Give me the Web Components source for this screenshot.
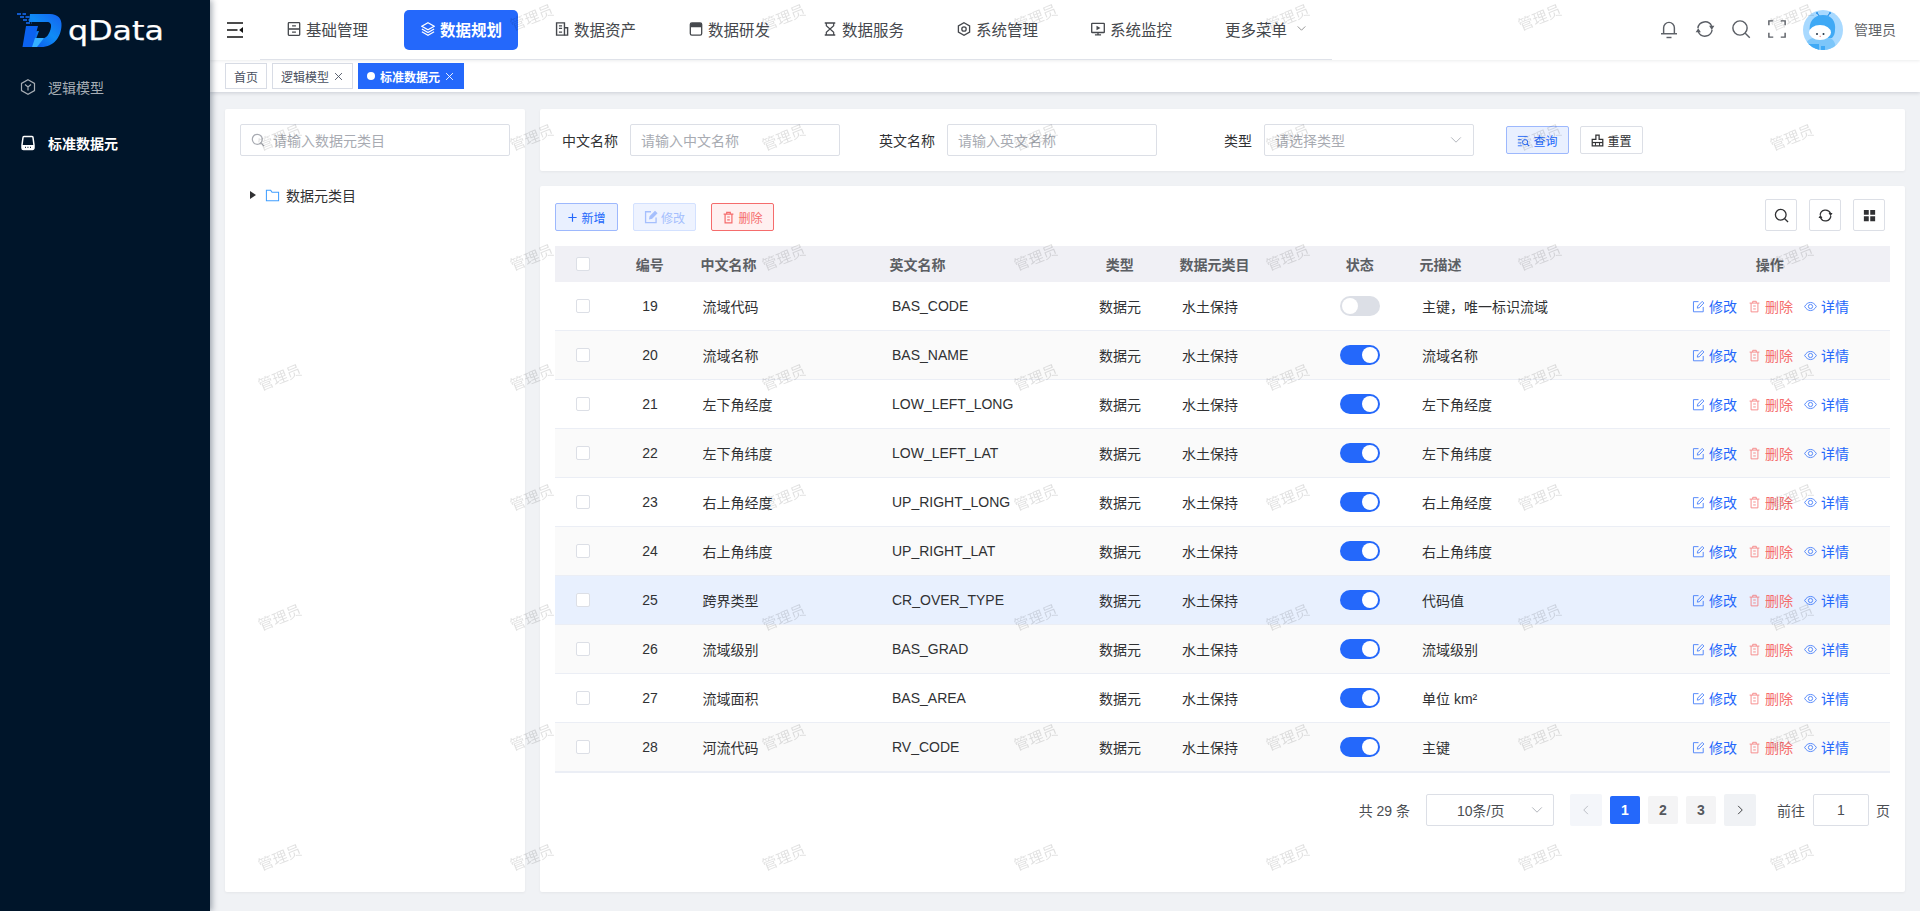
<!DOCTYPE html>
<html lang="zh">
<head>
<meta charset="utf-8">
<title>qData</title>
<style>
  html, body { margin: 0; height: 911px; overflow: hidden; background: #f0f2f5; }
  body { font-family: "Liberation Sans", "Noto Sans CJK SC", sans-serif; font-size: 14px; color: #303133; }
</style>
</head>
<body>
<q-app>
  <q-sidebar slot="side">
    <q-menu-item icon="cube">逻辑模型</q-menu-item>
    <q-menu-item icon="drive" active>标准数据元</q-menu-item>
  </q-sidebar>
  <q-header slot="top">
    <q-nav-item icon="basic">基础管理</q-nav-item>
    <q-nav-item icon="layers" active>数据规划</q-nav-item>
    <q-nav-item icon="asset">数据资产</q-nav-item>
    <q-nav-item icon="dev">数据研发</q-nav-item>
    <q-nav-item icon="hourglass">数据服务</q-nav-item>
    <q-nav-item icon="hexagon">系统管理</q-nav-item>
    <q-nav-item icon="monitor">系统监控</q-nav-item>
    <q-nav-item more>更多菜单</q-nav-item>
  </q-header>
  <q-tags slot="top">
    <q-tag>首页</q-tag>
    <q-tag closable>逻辑模型</q-tag>
    <q-tag closable active>标准数据元</q-tag>
  </q-tags>

  <q-tree-card>
    <q-tree-node>数据元类目</q-tree-node>
  </q-tree-card>

  <q-filter-card>
    <q-field label="中文名称" placeholder="请输入中文名称"></q-field>
    <q-field label="英文名称" placeholder="请输入英文名称"></q-field>
    <q-field label="类型" placeholder="请选择类型" select></q-field>
    <q-btn kind="primary" icon="query" slot="actions">查询</q-btn>
    <q-btn icon="broom" slot="actions">重置</q-btn>
  </q-filter-card>

  <q-table-card>
    <q-btn kind="primary" icon="plus" size="11" slot="tools">新增</q-btn>
    <q-btn kind="disabled" icon="edit" size="14" slot="tools">修改</q-btn>
    <q-btn kind="danger" icon="trash" size="13" slot="tools">删除</q-btn>
    <q-icon-btn icon="search" slot="right"></q-icon-btn>
    <q-icon-btn icon="refresh" slot="right"></q-icon-btn>
    <q-icon-btn icon="grid" slot="right"></q-icon-btn>

    <q-row code="19" cn="流域代码" en="BAS_CODE" desc="主键，唯一标识流域"></q-row>
    <q-row code="20" cn="流域名称" en="BAS_NAME" desc="流域名称" on striped></q-row>
    <q-row code="21" cn="左下角经度" en="LOW_LEFT_LONG" desc="左下角经度" on></q-row>
    <q-row code="22" cn="左下角纬度" en="LOW_LEFT_LAT" desc="左下角纬度" on striped></q-row>
    <q-row code="23" cn="右上角经度" en="UP_RIGHT_LONG" desc="右上角经度" on></q-row>
    <q-row code="24" cn="右上角纬度" en="UP_RIGHT_LAT" desc="右上角纬度" on striped></q-row>
    <q-row code="25" cn="跨界类型" en="CR_OVER_TYPE" desc="代码值" on hover></q-row>
    <q-row code="26" cn="流域级别" en="BAS_GRAD" desc="流域级别" on striped></q-row>
    <q-row code="27" cn="流域面积" en="BAS_AREA" desc="单位 km²" on></q-row>
    <q-row code="28" cn="河流代码" en="RV_CODE" desc="主键" on striped></q-row>

    <q-pagination slot="footer"></q-pagination>
  </q-table-card>
</q-app>
<q-watermark text="管理员"></q-watermark>

<script>
const BLUE = '#2468fb';

const ICONS = {
  burger: '<path d="M0 1h16M0 8h10.500M0 15h16" stroke-width="1.400"/><path d="M16 5v6l-3.800-3z" fill="currentColor" stroke="none"/>',
  basic: '<rect x="1.500" y=".8" width="13" height="14.400" rx=".8" stroke-width="1.500"/><path d="M1.500 8h13" stroke-width="1.800"/><path d="M5.800 4.400h4.400M5.800 11.600h4.400" stroke-width="1.500"/>',
  layers: '<path d="M8 .8 15 4.800 8 8.800 1 4.800z" stroke-width="1.400"/><path d="M1 8 8 12 15 8" stroke-width="1.400"/><path d="M1 11.200 8 15.200 15 11.200" stroke-width="1.400"/>',
  asset: '<path d="M1.800 1h9v14h-9z" stroke-width="1.600"/><path d="M10.800 6.500h3.600V15h-3.600" stroke-width="1.600"/><path d="M4.500 4.300h3.600M4.500 7.300h3.600M4.500 11.500h3.600" stroke-width="1.400"/>',
  dev: '<rect x="1.500" y="1" width="13" height="14" rx="1.800" stroke-width="1.500"/><path d="M1.500 6V2.800A1.800 1.800 0 0 1 3.300 1h9.400a1.800 1.800 0 0 1 1.800 1.800V6z" fill="currentColor" stroke="none"/>',
  hourglass: '<path d="M2 1.200h12M2 14.800h12" stroke-width="1.700"/><path d="M3.800 1.200v3L8 8l-4.200 3.800v3M12.200 1.200v3L8 8l4.200 3.800v3" stroke-width="1.400"/>',
  hexagon: '<path d="M8 .8 14.400 4.400v7.200L8 15.200l-6.400-3.600V4.400z" stroke-width="1.500"/><circle cx="8" cy="8" r="2.500" stroke-width="1.500"/>',
  monitor: '<rect x=".8" y="1.500" width="14.400" height="10.500" rx=".6" stroke-width="1.500"/><path d="M8 12v2.700M4.500 14.700h7" stroke-width="1.500"/><path d="M6.300 4.300 10.800 6.800 6.300 9.300z" fill="currentColor" stroke="none"/>',
  cube: '<path d="M8 .8 14.500 4.400v7.200L8 15.200l-6.500-3.600V4.400z"/><path d="M5 5.500 8 8l3-2.500M8 8v3.500"/>',
  drive: '<path d="M4 1.500h8a1 1 0 0 1 1 1L14 10v3a1.500 1.500 0 0 1-1.500 1.500h-9A1.500 1.500 0 0 1 2 13v-3l1-7.500a1 1 0 0 1 1-1z" stroke-width="1.500"/><path d="M2 10h12v3a1.500 1.500 0 0 1-1.500 1.500h-9A1.500 1.500 0 0 1 2 13z" fill="currentColor" stroke="none"/><path d="M5 12.400h.9M7.500 12.400h.9M10 12.400h.9" stroke="#00152a" stroke-width="1.200"/>',
  bell: '<path d="M3.700 11.800V7a4.300 4.300 0 0 1 8.600 0v4.800"/><path d="M1.600 11.800h12.800"/><path d="M6 14.800h4"/>',
  refresh: '<path d="M2.300 7.400A5.800 5.800 0 0 1 13.300 5.600" stroke-width="1.400"/><path d="M13.700 8.600A5.800 5.800 0 0 1 2.700 10.400" stroke-width="1.400"/><path d="M11.300 5.400h4.200L13.400 8.700zM.5 10.600h4.200L2.600 7.300z" fill="currentColor" stroke="none"/>',
  search: '<circle cx="7.200" cy="7.200" r="5.700" stroke-width="1.400"/><path d="M11.400 11.400 15 15" stroke-width="1.400"/>',
  fullscreen: '<path d="M1.500 5V1.500H5M11 1.500h3.500V5M14.500 11v3.500H11M5 14.500H1.500V11" stroke-width="1.500"/>',
  folder: '<path d="M1.500 2.500h4.600l1.400 2h7v9h-13z" stroke-width="1.100"/>',
  chevron: '<path d="M2.500 5 8 10.500 13.500 5" stroke-width="1"/>',
  left: '<path d="M10.500 2.500 5 8l5.500 5.500" stroke-width="1.200"/>',
  right: '<path d="M5.500 2.500 11 8l-5.500 5.500" stroke-width="1.200"/>',
  close: '<path d="M3 3l10 10M13 3 3 13" stroke-width="1.300"/>',
  plus: '<path d="M8 2v12M2 8h12" stroke-width="1.700"/>',
  edit: '<path d="M13.800 8.500v6H1.800V2H8" stroke-width="1.500"/><path d="M6.500 10 7 7.500 12.600 1.700l2 2-5.600 5.800z" stroke-width="1.300" fill="currentColor"/>',
  trash: '<path d="M2 3.800h12M5.800 3.800V1.600h4.400v2.200M3.800 3.800v10.800h8.400V3.800M6.400 7.400h3.200M6.400 11h3.200" stroke-width="1.500"/>',
  eye: '<path d="M.8 8c1.900-3.300 4.400-5 7.200-5s5.300 1.700 7.200 5c-1.900 3.300-4.400 5-7.200 5S2.700 11.300.8 8z" stroke-width="1.500"/><circle cx="8" cy="8" r="2.600" stroke-width="1.500"/>',
  query: '<path d="M1 3h12M1 7h4.500M1 11h4.500M1 14.500h5" stroke-width="1.100"/><circle cx="10" cy="10" r="3.200" stroke-width="1.200"/><path d="M12.300 12.300 15 15" stroke-width="1.300"/>',
  broom: '<path d="M6 1.500h4v5h4.500v8h-13v-8H6z" stroke-width="1.500"/><path d="M1.500 10.500h13" stroke-width="1.500"/><path d="M5.500 10.500v4M10.500 10.500v4" stroke-width="1.200"/>',
  grid: '<path d="M2 2h5.200v5.200H2zM8.800 2H14v5.200H8.800zM2 8.800h5.200V14H2zM8.800 8.800H14V14H8.800z" fill="currentColor" stroke="none"/>'
};

function icon(name, w, h) {
  return `<svg width="${w}" height="${h || w}" viewBox="0 0 16 16" fill="none" stroke="currentColor" stroke-width="1.200" aria-hidden="true">${ICONS[name]}</svg>`;
}

class QApp extends HTMLElement {
  connectedCallback() {
    this.attachShadow({ mode: 'open' }).innerHTML = `
      <style>
        :host { display: grid; grid-template-columns: 210px 1fr; height: 911px; }
        .main { display: flex; flex-direction: column; min-width: 0; }
        .content { flex: 1; display: grid; grid-template-columns: 300px 1fr; grid-template-rows: 62px 706px; gap: 15px; padding: 17px 15px 0; }
      </style>
      <slot name="side"></slot>
      <div class="main">
        <slot name="top"></slot>
        <div class="content"><slot></slot></div>
      </div>`;
  }
}

class QSidebar extends HTMLElement {
  connectedCallback() {
    this.attachShadow({ mode: 'open' }).innerHTML = `
      <style>
        :host { display: block; background: #00152a; box-shadow: 2px 0 6px rgba(0,21,41,.35); position: relative; z-index: 3; }
        .logo { height: 60px; display: flex; align-items: center; padding-left: 17px; gap: 5px; box-sizing: border-box; }
        .word { color: #fff; font: 400 26px "DejaVu Sans", sans-serif; line-height: 60px; margin-top: 1px; display: inline-block; transform: scaleX(1.22); transform-origin: left center; -webkit-text-stroke: .25px #fff; }
      </style>
      <div class="logo">
        <svg width="46" height="35" viewBox="0 0 46 35" aria-hidden="true">
          <defs>
            <linearGradient id="lg" x1="0" y1="1" x2="1" y2="0">
              <stop offset="0" stop-color="#0a49e8"/><stop offset=".55" stop-color="#0f8cf5"/><stop offset="1" stop-color="#1460f0"/>
            </linearGradient>
          </defs>
          <path d="M0 1h9M3 4h13M6 7h10M9 10h6" stroke="#1670ff" stroke-width="1.500" stroke-dasharray="4 1.500"/>
          <path fill="url(#lg)" fill-rule="evenodd" d="M13 1h20c8 0 12 5 11.500 11.500C44 24 37 34 24 34H6l4-15 12-1-3 8h5c5 0 9-5 10-12 .5-3-1-5-4-5H12z"/>
          <path fill="#0b62f0" d="M9 13h12l-3.500 13-2 8H5.500z"/>
          <path fill="#35b0ff" d="M18 25h9l-7 9h-5z"/>
        </svg>
        <span class="word">qData</span>
      </div>
      <nav><slot></slot></nav>`;
  }
}

class QMenuItem extends HTMLElement {
  connectedCallback() {
    const on = this.hasAttribute('active');
    this.attachShadow({ mode: 'open' }).innerHTML = `
      <style>
        :host { display: flex; align-items: center; height: 56px; box-sizing: border-box; padding: 0 0 2px 20px; gap: 12px; color: ${on ? '#fff' : '#a6adb4'}; font-size: 14px; font-weight: ${on ? 700 : 400}; }
        svg { flex: none; }
      </style>
      ${icon(this.getAttribute('icon'), 16)}<slot></slot>`;
  }
}

class QHeader extends HTMLElement {
  connectedCallback() {
    this.attachShadow({ mode: 'open' }).innerHTML = `
      <style>
        :host { display: flex; align-items: center; height: 60px; background: #fff; box-shadow: 0 1px 3px rgba(0,21,41,.08); position: relative; z-index: 2; }
        .burger { width: 50px; padding-left: 17px; box-sizing: border-box; display: flex; color: #111; }
        nav { display: flex; height: 60px; box-sizing: border-box; border-bottom: 1px solid #dfe2e9; }
        .right { margin-left: auto; display: flex; align-items: center; color: #5b5f66; padding-right: 24px; }
        .tools { display: flex; gap: 16px; margin: -2px 16px 0 0; }
        .tools svg * { stroke-width: 1.150; }
        .avatar { width: 40px; height: 40px; border-radius: 50%; overflow: hidden; display: block; }
        .name { margin: -2px 0 0 11px; font-size: 14px; color: #5f6368; }
      </style>
      <div class="burger">${icon('burger', 16)}</div>
      <nav><slot></slot></nav>
      <div class="right">
        <div class="tools">${icon('bell', 20)}${icon('refresh', 20)}${icon('search', 20)}${icon('fullscreen', 20)}</div>
        <svg class="avatar" viewBox="0 0 40 40" aria-hidden="true">
          <rect width="40" height="40" fill="#a8d9ff"/>
          <path d="M17 7 14 3M24 7l3-4" stroke="#2a8fe6" stroke-width="1.200" fill="none"/>
          <circle cx="14" cy="3" r="1" fill="#2a8fe6"/><circle cx="27" cy="3" r="1" fill="#2a8fe6"/>
          <path d="M7 22C5 12 11 5 20 5s13 7 12 15c0 3-1 6-3 8H10c-2-1-3-3-3-6z" fill="#3fa9f5"/>
          <path d="M1 40c0-7 5-12 10-12h15c4 0 7 5 7 12z" fill="#7cc6fa"/>
          <path d="M4 34h12v6H4zM18 36h4v4h-4z" fill="#3fa9f5"/>
          <ellipse cx="17" cy="22.500" rx="11" ry="7.500" fill="#fff"/>
          <circle cx="14" cy="24" r="1" fill="#234"/><circle cx="20.500" cy="24" r="1" fill="#234"/>
          <path d="M16.500 26.300h1.500" stroke="#e88" stroke-width="1"/>
        </svg>
        <span class="name">管理员</span>
      </div>`;
  }
}

class QNavItem extends HTMLElement {
  connectedCallback() {
    const on = this.hasAttribute('active');
    const more = this.hasAttribute('more');
    this.attachShadow({ mode: 'open' }).innerHTML = `
      <style>
        :host { display: block; width: 134px; padding: 10px; box-sizing: border-box; height: 59px; }
        .item { height: 40px; box-sizing: border-box; display: flex; align-items: center; padding: 0 0 3px 17px; gap: ${more ? 0 : 5}px; border-radius: 5px; font-size: 15.500px; white-space: nowrap;
                color: ${on ? '#fff' : '#45484d'}; background: ${on ? BLUE : 'transparent'}; font-weight: ${on ? 700 : 400}; }
        svg { flex: none; }
        .chev { display: flex; margin-left: 9px; color: #666; }
      </style>
      <div class="item">${more ? '' : icon(this.getAttribute('icon'), 14)}<slot></slot>${more ? `<span class="chev">${icon('chevron', 11)}</span>` : ''}</div>`;
  }
}

class QTags extends HTMLElement {
  connectedCallback() {
    this.attachShadow({ mode: 'open' }).innerHTML = `
      <style>
        :host { display: flex; align-items: center; gap: 5px; height: 32px; padding-left: 15px; background: #fff; box-shadow: 0 1px 4px rgba(0,21,41,.16); position: relative; z-index: 1; }
      </style>
      <slot></slot>`;
  }
}

class QTag extends HTMLElement {
  connectedCallback() {
    const on = this.hasAttribute('active');
    const closable = this.hasAttribute('closable');
    this.attachShadow({ mode: 'open' }).innerHTML = `
      <style>
        :host { display: flex; align-items: center; height: 26px; box-sizing: border-box; padding: 0 8px; font-size: 12px;
                border: 1px solid ${on ? BLUE : '#d8dce5'}; background: ${on ? BLUE : '#fff'}; color: ${on ? '#fff' : '#495060'}; font-weight: ${on ? 700 : 400}; }
        .dot { width: 8px; height: 8px; border-radius: 50%; background: #fff; margin-right: 5px; }
        .x { display: flex; margin-left: 4px; font-weight: 400; }
      </style>
      ${on ? '<span class="dot"></span>' : ''}<slot></slot>${closable ? `<span class="x">${icon('close', 11)}</span>` : ''}`;
  }
}

class QTreeCard extends HTMLElement {
  connectedCallback() {
    this.attachShadow({ mode: 'open' }).innerHTML = `
      <style>
        :host { display: block; grid-row: 1 / span 2; background: #fff; border-radius: 2px; padding: 15px; box-shadow: 0 1px 3px rgba(0,0,0,.05); box-sizing: border-box; }
        .search { height: 32px; box-sizing: border-box; border: 1px solid #dcdfe6; border-radius: 2px; display: flex; align-items: center; padding-left: 10px; gap: 8px; color: #a8abb2; font-size: 14px; }
        .tree { margin-top: 26px; }
      </style>
      <div class="search">${icon('search', 14)}<span>请输入数据元类目</span></div>
      <div class="tree"><slot></slot></div>`;
  }
}

class QTreeNode extends HTMLElement {
  connectedCallback() {
    this.attachShadow({ mode: 'open' }).innerHTML = `
      <style>
        :host { display: flex; align-items: center; height: 26px; padding-left: 10px; font-size: 14px; color: #303133; }
        .caret { width: 0; height: 0; border-left: 6px solid #303133; border-top: 4px solid transparent; border-bottom: 4px solid transparent; margin-right: 9px; }
        .folder { display: flex; color: #409eff; margin-right: 6px; }
      </style>
      <span class="caret"></span><span class="folder">${icon('folder', 15)}</span><slot></slot>`;
  }
}

class QFilterCard extends HTMLElement {
  connectedCallback() {
    this.attachShadow({ mode: 'open' }).innerHTML = `
      <style>
        :host { display: flex; align-items: center; background: #fff; border-radius: 2px; padding: 0 15px; box-shadow: 0 1px 3px rgba(0,0,0,.05); }
        .actions { display: flex; gap: 11px; }
      </style>
      <slot></slot>
      <div class="actions"><slot name="actions"></slot></div>`;
  }
}

class QField extends HTMLElement {
  connectedCallback() {
    const select = this.hasAttribute('select');
    this.attachShadow({ mode: 'open' }).innerHTML = `
      <style>
        :host { display: flex; align-items: center; margin-right: 32px; font-size: 14px; }
        label { width: 75px; box-sizing: border-box; padding: 0 12px 1px 0; text-align: right; color: #303133; white-space: nowrap; }
        .box { width: 210px; height: 32px; box-sizing: border-box; border: 1px solid #dcdfe6; border-radius: 2px; display: flex; align-items: center; justify-content: space-between; padding: 0 10px; color: #a8abb2; }
        svg { color: #a8abb2; }
      </style>
      <label>${this.getAttribute('label')}</label>
      <div class="box"><span>${this.getAttribute('placeholder')}</span>${select ? icon('chevron', 14) : ''}</div>`;
  }
}

const BTN_KINDS = {
  plain: 'background:#fff;border-color:#dcdfe6;color:#303133;',
  primary: `background:#e9f0ff;border-color:#9db8fd;color:${BLUE};`,
  disabled: 'background:#eef3ff;border-color:#d3e1ff;color:#a5bffd;',
  danger: 'background:#fff0f0;border-color:#f56c6c;color:#f56c6c;'
};

class QBtn extends HTMLElement {
  connectedCallback() {
    const kind = this.getAttribute('kind') || 'plain';
    this.attachShadow({ mode: 'open' }).innerHTML = `
      <style>
        :host { display: inline-flex; align-items: center; justify-content: center; gap: 3px; width: 63px; height: 28px; box-sizing: border-box; border: 1px solid; border-radius: 2px; font-size: 12px; ${BTN_KINDS[kind]} }
      </style>
      ${icon(this.getAttribute('icon'), this.getAttribute('size') || 13)}<slot></slot>`;
  }
}

class QIconBtn extends HTMLElement {
  connectedCallback() {
    this.attachShadow({ mode: 'open' }).innerHTML = `
      <style>
        :host { display: flex; align-items: center; justify-content: center; width: 32px; height: 32px; box-sizing: border-box; border: 1px solid #dcdfe6; border-radius: 2px; color: #303133; }
      </style>
      ${icon(this.getAttribute('icon'), 15)}`;
  }
}

const COLS = '56px 78px 189px 194px 96px 144px 96px 242px 240px';

class QTableCard extends HTMLElement {
  connectedCallback() {
    this.attachShadow({ mode: 'open' }).innerHTML = `
      <style>
        :host { display: block; background: #fff; border-radius: 2px; padding: 13px 15px 0; box-shadow: 0 1px 3px rgba(0,0,0,.05); --cols: ${COLS}; }
        .toolbar { display: flex; justify-content: space-between; align-items: flex-end; height: 32px; padding-right: 5px; margin-bottom: 15px; }
        .group { display: flex; gap: 15px; }
        .group.right { gap: 12px; }
        .head { display: grid; grid-template-columns: var(--cols); align-items: center; height: 36px; box-sizing: border-box; padding-bottom: 1px; background: #f0f0f5; font-weight: 700; color: #5c5f64; font-size: 14px; }
        .head > * { padding: 0 12px 0 11.500px; white-space: nowrap; }
        .c { text-align: center; }
        .check { width: 14px; height: 14px; box-sizing: border-box; padding: 0; border: 1px solid #dcdfe6; border-radius: 2px; background: #fff; justify-self: center; }
        .rows { border-bottom: 1px solid #ebeef5; }
        .pager { margin-top: 21px; }
      </style>
      <div class="toolbar">
        <div class="group"><slot name="tools"></slot></div>
        <div class="group right"><slot name="right"></slot></div>
      </div>
      <div class="head">
        <span class="check"></span><span class="c">编号</span><span>中文名称</span><span>英文名称</span><span class="c">类型</span><span>数据元类目</span><span class="c">状态</span><span>元描述</span><span class="c">操作</span>
      </div>
      <div class="rows"><slot></slot></div>
      <div class="pager"><slot name="footer"></slot></div>`;
  }
}

class QRow extends HTMLElement {
  connectedCallback() {
    const a = n => this.getAttribute(n);
    const bg = this.hasAttribute('hover') ? '#e8f0fe' : this.hasAttribute('striped') ? '#fafafa' : '#fff';
    this.attachShadow({ mode: 'open' }).innerHTML = `
      <style>
        :host { display: grid; grid-template-columns: var(--cols); align-items: center; height: 49px; box-sizing: border-box; border-bottom: 1px solid #ebeef5; background: ${bg}; font-size: 14px; color: #303133; white-space: nowrap; }
        .t { padding: 0 14px; }
        .t.cn { padding-left: 13.500px; }
        .c { text-align: center; }
        .check { width: 14px; height: 14px; box-sizing: border-box; border: 1px solid #dcdfe6; border-radius: 2px; background: #fff; justify-self: center; }
        .sw { justify-self: center; }
        .ops { display: flex; justify-content: center; gap: 11px; padding-left: 1px; }
        .op { display: inline-flex; align-items: center; gap: 4px; color: ${BLUE}; }
        .op svg { opacity: .8; }
        .op svg * { stroke-width: 1.150; fill: none; }
        .op.del { color: #f56c6c; }
      </style>
      <span class="check"></span>
      <span class="c">${a('code')}</span>
      <span class="t cn">${a('cn')}</span>
      <span class="t">${a('en')}</span>
      <span class="c">数据元</span>
      <span class="t">水土保持</span>
      <q-switch class="sw" ${this.hasAttribute('on') ? 'on' : ''}></q-switch>
      <span class="t">${a('desc')}</span>
      <span class="ops">
        <span class="op">${icon('edit', 13)}修改</span>
        <span class="op del">${icon('trash', 13)}删除</span>
        <span class="op">${icon('eye', 13)}详情</span>
      </span>`;
  }
}

class QSwitch extends HTMLElement {
  connectedCallback() {
    const on = this.hasAttribute('on');
    this.attachShadow({ mode: 'open' }).innerHTML = `
      <style>
        :host { display: flex; align-items: center; justify-content: ${on ? 'flex-end' : 'flex-start'}; width: 40px; height: 20px; padding: 2px; box-sizing: border-box; border-radius: 10px; background: ${on ? BLUE : '#dcdfe6'}; }
        i { width: 16px; height: 16px; border-radius: 50%; background: #fff; display: block; }
      </style>
      <i></i>`;
  }
}

class QPagination extends HTMLElement {
  connectedCallback() {
    this.attachShadow({ mode: 'open' }).innerHTML = `
      <style>
        :host { display: flex; align-items: center; justify-content: flex-end; height: 32px; font-size: 14px; color: #4b4e53; }
        .select { width: 128px; height: 32px; box-sizing: border-box; border: 1px solid #dcdfe6; border-radius: 2px; margin: 0 16px; display: flex; align-items: center; justify-content: space-between; padding: 0 9px 0 30px; color: #4b4e53; }
        .select svg { color: #a8abb2; }
        .nav { width: 32px; height: 32px; display: flex; align-items: center; justify-content: center; background: #f0f2f5; border-radius: 2px; color: #303133; }
        .nav.off { background: #f4f6fa; color: #b4b8bf; }
        .num { width: 30px; height: 28px; display: flex; align-items: center; justify-content: center; background: #f4f4f5; color: #55585d; font-weight: 700; border-radius: 2px; }
        .num.on { background: ${BLUE}; color: #fff; }
        .pages { display: flex; align-items: center; gap: 8px; }
        .jump { margin-left: 21px; }
        .input { width: 56px; height: 32px; box-sizing: border-box; border: 1px solid #dcdfe6; border-radius: 2px; margin: 0 7px 0 8px; display: flex; align-items: center; justify-content: center; color: #4b4e53; }
      </style>
      <span>共 29 条</span>
      <div class="select"><span>10条/页</span>${icon('chevron', 14)}</div>
      <div class="pages">
        <span class="nav off">${icon('left', 12)}</span>
        <span class="num on">1</span><span class="num">2</span><span class="num">3</span>
        <span class="nav">${icon('right', 12)}</span>
      </div>
      <span class="jump">前往</span><div class="input">1</div><span>页</span>`;
  }
}

// overlay of staggered marks, 252 by 120 apart
class QWatermark extends HTMLElement {
  connectedCallback() {
    const text = this.getAttribute('text');
    let marks = '';
    for (let r = 0; r < 8; r++) {
      const start = r % 2 ? 280 : 532;
      for (let x = start; x < 1920; x += 252) {
        marks += `<span style="left:${x - 30}px;top:${18 + r * 120 - 10}px">${text}</span>`;
      }
    }
    this.attachShadow({ mode: 'open' }).innerHTML = `
      <style>
        :host { position: fixed; inset: 0; pointer-events: none; z-index: 9; overflow: hidden; }
        span { position: absolute; width: 60px; text-align: center; font-size: 15px; line-height: 20px; color: rgba(0,0,0,.12); transform: rotate(-22deg); }
      </style>
      ${marks}`;
  }
}

customElements.define('q-app', QApp);
customElements.define('q-sidebar', QSidebar);
customElements.define('q-menu-item', QMenuItem);
customElements.define('q-header', QHeader);
customElements.define('q-nav-item', QNavItem);
customElements.define('q-tags', QTags);
customElements.define('q-tag', QTag);
customElements.define('q-tree-card', QTreeCard);
customElements.define('q-tree-node', QTreeNode);
customElements.define('q-filter-card', QFilterCard);
customElements.define('q-field', QField);
customElements.define('q-btn', QBtn);
customElements.define('q-icon-btn', QIconBtn);
customElements.define('q-table-card', QTableCard);
customElements.define('q-row', QRow);
customElements.define('q-switch', QSwitch);
customElements.define('q-pagination', QPagination);
customElements.define('q-watermark', QWatermark);
</script>
</body>
</html>
